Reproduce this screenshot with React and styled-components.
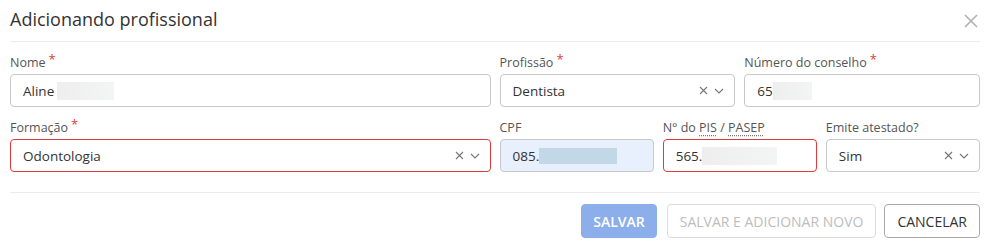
import React from 'react';
import styled, { createGlobalStyle } from 'styled-components';

const GlobalStyle = createGlobalStyle`
  body {
    margin: 0;
    background: #fff;
    font-family: "Open Sans", "Noto Sans", Arial, sans-serif;
    color: #333;
  }
`;

const ClearIcon = () => (
  <svg width="9" height="9" viewBox="0 0 9 9">
    <path d="M1 1 L8 8 M8 1 L1 8" stroke="#777" strokeWidth="1.1" fill="none" />
  </svg>
);

const ChevronIcon = () => (
  <svg width="10" height="6" viewBox="0 0 10 6">
    <path d="M1 1 L5 5 L9 1" stroke="#777" strokeWidth="1.1" fill="none" />
  </svg>
);

const CloseIcon = () => (
  <svg width="14" height="14" viewBox="0 0 14 14">
    <path d="M1 1 L13 13 M13 1 L1 13" stroke="#b0b0b0" strokeWidth="1.6" fill="none" />
  </svg>
);

const Field = ({ label, required, span, children }) => (
  <FieldBox $span={span}>
    <Label>
      {label}
      {required && <Star>*</Star>}
    </Label>
    {children}
  </FieldBox>
);

const Select = ({ value, invalid }) => (
  <InputBox $invalid={invalid}>
    <Value>{value}</Value>
    <Icons>
      <ClearIcon />
      <ChevronIcon />
    </Icons>
  </InputBox>
);

const App = () => {
  return (
    <>
      <GlobalStyle />
      <Modal>
        <Header>
          <Title>Adicionando profissional</Title>
          <CloseButton>
            <CloseIcon />
          </CloseButton>
        </Header>
        <Body>
          <Field label="Nome" required span={6}>
            <InputBox>
              <Value>Aline</Value>
              <Redacted $width={57} $offset={3} />
            </InputBox>
          </Field>
          <Field label="Profissão" required span={3}>
            <Select value="Dentista" />
          </Field>
          <Field label="Número do conselho" required span={3}>
            <InputBox>
              <Value>65</Value>
              <Redacted $width={39} />
            </InputBox>
          </Field>

          <Field label="Formação" required span={6}>
            <Select value="Odontologia" invalid />
          </Field>
          <Field label="CPF" span={2}>
            <InputBox $filled>
              <Value>085.</Value>
              <Redacted $width={78} $height={16} $blue />
            </InputBox>
          </Field>
          <Field label={<>N° do <Abbr>PIS</Abbr> / <Abbr>PASEP</Abbr></>} span={2}>
            <InputBox $invalid>
              <Value>565.</Value>
              <Redacted $width={75} />
            </InputBox>
          </Field>
          <Field label="Emite atestado?" span={2}>
            <Select value="Sim" />
          </Field>
        </Body>
        <Footer>
          <Button $variant="primary">SALVAR</Button>
          <Button $variant="disabled">SALVAR E ADICIONAR NOVO</Button>
          <Button>CANCELAR</Button>
        </Footer>
      </Modal>
    </>
  );
};

export default App;

// Styled components
const Modal = styled.div`
  width: 991px;
  height: 244px;
  box-sizing: border-box;
  padding: 0 11px 0 10px;
  background: #fff;
`;

const Header = styled.div`
  height: 42px;
  display: flex;
  align-items: center;
  justify-content: space-between;
  border-bottom: 1px solid #ececec;
  box-sizing: border-box;
`;

const Title = styled.h4`
  margin: 0;
  margin-top: -4px;
  font-size: 18px;
  font-weight: 400;
  color: #333;
`;

const CloseButton = styled.div`
  display: flex;
  margin-right: 2px;
  margin-top: 1px;
`;

const Body = styled.div`
  display: grid;
  grid-template-columns: repeat(12, 1fr);
  column-gap: 9px;
  row-gap: 12px;
  padding-top: 12px;
  padding-bottom: 20px;
  border-bottom: 1px solid #ececec;
`;

const FieldBox = styled.div`
  grid-column: span ${(p) => p.$span};
  display: flex;
  flex-direction: column;
`;

const Label = styled.label`
  font-size: 12.5px;
  color: #555;
  line-height: 17px;
  height: 17px;
  margin-bottom: 3px;
  white-space: nowrap;
`;

const Star = styled.span`
  color: #e03b3b;
  font-size: 13px;
  margin-left: 3px;
  position: relative;
  top: -3px;
`;

const Abbr = styled.span`
  text-decoration: underline dotted #777;
  text-underline-offset: 3px;
`;

const InputBox = styled.div`
  height: 33px;
  box-sizing: border-box;
  display: flex;
  align-items: center;
  padding: 0 10px 0 12px;
  border: 1px solid ${(p) => (p.$invalid ? '#e0393b' : '#c8c8c8')};
  border-radius: 4px;
  background: ${(p) => (p.$filled ? '#e8f0fe' : '#fff')};
`;

const Value = styled.span`
  font-size: 13.5px;
  color: #333;
`;

const Redacted = styled.span`
  display: inline-block;
  width: ${(p) => p.$width}px;
  height: ${(p) => p.$height || 18}px;
  margin-left: ${(p) => p.$offset || 0}px;
  background: ${(p) =>
    p.$blue ? '#c3d8e6' : 'linear-gradient(90deg, #eeeeee, #f3f4f4)'};
`;

const Icons = styled.div`
  margin-left: auto;
  display: flex;
  align-items: center;
  gap: 6px;
`;

const Footer = styled.div`
  display: flex;
  justify-content: flex-end;
  gap: 8px;
  padding-top: 11px;
`;

const Button = styled.div`
  height: 34px;
  box-sizing: border-box;
  display: flex;
  align-items: center;
  padding: 0 ${(p) => (p.$variant === 'primary' ? 11 : 12)}px;
  margin-right: ${(p) => (p.$variant === 'primary' ? 2 : 0)}px;
  font-size: 14px;
  border-radius: 4px;
  border: 1px solid
    ${(p) =>
      p.$variant === 'primary' ? '#8caeea' : p.$variant === 'disabled' ? '#dcdcdc' : '#a8a8a8'};
  background: ${(p) => (p.$variant === 'primary' ? '#8caeea' : '#fff')};
  color: ${(p) =>
    p.$variant === 'primary' ? '#fff' : p.$variant === 'disabled' ? '#bdbdbd' : '#333'};
  font-weight: ${(p) => (p.$variant === 'primary' ? 600 : 400)};
`;
